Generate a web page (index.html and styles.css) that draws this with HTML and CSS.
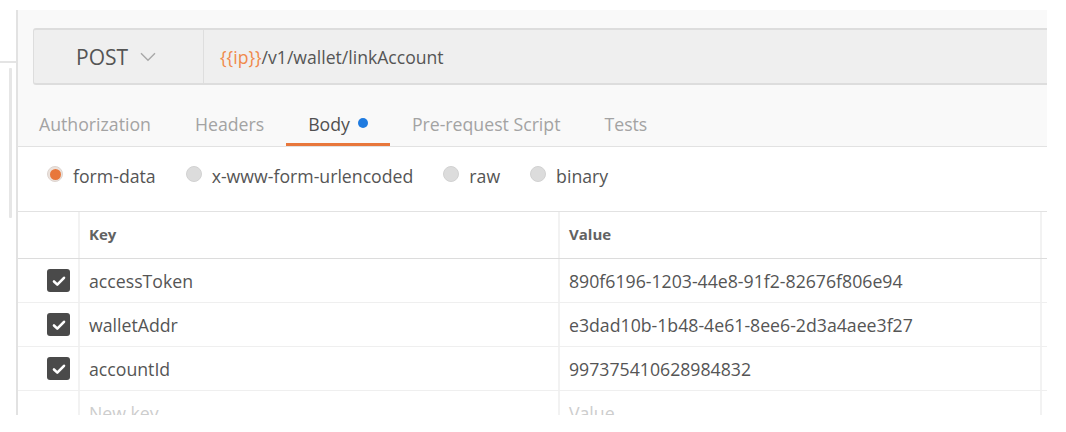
FILE: index.html
```html
<!DOCTYPE html>
<html lang="en">
<head>
<meta charset="utf-8">
<title>POST linkAccount</title>
<link rel="stylesheet" href="styles.css">
</head>
<body>
<div class="app">
  <aside class="rail">
    <div class="rail-divider"></div>
    <div class="rail-thumb"></div>
  </aside>
  <main class="panel">
    <section class="request">
      <div class="urlbar">
        <div class="method">
          <span class="method-name">POST</span>
          <svg class="chevron" width="16" height="10" viewBox="0 0 16 10" aria-hidden="true"><path d="M1 1.2 L8 8.3 L15 1.2"/></svg>
        </div>
        <div class="url"><span class="var">{{ip}}</span>/v1/wallet/linkAccount</div>
      </div>
      <nav class="tabs">
        <span class="tab">Authorization</span>
        <span class="tab">Headers</span>
        <span class="tab active">Body<span class="dot"></span></span>
        <span class="tab">Pre-request Script</span>
        <span class="tab">Tests</span>
      </nav>
    </section>

    <div class="body-types">
      <label class="radio"><span class="radio-dot checked"></span>form-data</label>
      <label class="radio"><span class="radio-dot"></span>x-www-form-urlencoded</label>
      <label class="radio"><span class="radio-dot"></span>raw</label>
      <label class="radio"><span class="radio-dot"></span>binary</label>
    </div>

    <div class="kv-table">
      <div class="kv-row kv-head">
        <div class="cell c-check"></div>
        <div class="cell c-key">Key</div>
        <div class="cell c-value">Value</div>
        <div class="cell c-end"></div>
      </div>
      <div class="kv-row">
        <div class="cell c-check"><span class="checkbox"><svg width="22" height="22" viewBox="0 0 22 22"><path d="M6 11.5 L9.3 14.6 L16 7.8"/></svg></span></div>
        <div class="cell c-key">accessToken</div>
        <div class="cell c-value">890f6196-1203-44e8-91f2-82676f806e94</div>
        <div class="cell c-end"></div>
      </div>
      <div class="kv-row">
        <div class="cell c-check"><span class="checkbox"><svg width="22" height="22" viewBox="0 0 22 22"><path d="M6 11.5 L9.3 14.6 L16 7.8"/></svg></span></div>
        <div class="cell c-key">walletAddr</div>
        <div class="cell c-value">e3dad10b-1b48-4e61-8ee6-2d3a4aee3f27</div>
        <div class="cell c-end"></div>
      </div>
      <div class="kv-row">
        <div class="cell c-check"><span class="checkbox"><svg width="22" height="22" viewBox="0 0 22 22"><path d="M6 11.5 L9.3 14.6 L16 7.8"/></svg></span></div>
        <div class="cell c-key">accountId</div>
        <div class="cell c-value">997375410628984832</div>
        <div class="cell c-end"></div>
      </div>
      <div class="kv-row">
        <div class="cell c-check"></div>
        <div class="cell c-key placeholder">New key</div>
        <div class="cell c-value placeholder">Value</div>
        <div class="cell c-end"></div>
      </div>
    </div>
  </main>
</div>
</body>
</html>
```
FILE: styles.css
```css
* { box-sizing: border-box; }

html, body {
  margin: 0;
  padding: 0;
  background: #ffffff;
}

body {
  font-family: "Open Sans", "Liberation Sans", sans-serif;
  font-size: 18px;
  color: #505050;
  width: 1066px;
  height: 432px;
  overflow: hidden;
}

.app {
  display: flex;
  align-items: flex-start;
}

/* left rail */
.rail {
  width: 16px;
  height: 415px;
  flex: none;
}
.rail-divider {
  margin-top: 61px;
  height: 2px;
  background: #e4e4e4;
}
.rail-thumb {
  margin-top: 5px;
  margin-left: 9px;
  width: 3px;
  height: 150px;
  background: #e6e6e6;
  border-radius: 1px;
}

/* main panel */
.panel {
  margin-top: 10px;
  width: 1031px;
  height: 405px;
  border-left: 2px solid #e2e2e2;
  overflow: hidden;
  flex: none;
  background: #ffffff;
}

.request {
  background: #f9f9f9;
  padding-top: 18px;
}

.urlbar {
  margin-left: 15px;
  height: 57px;
  display: flex;
  background: #efefef;
  border-top: 2px solid #dddddd;
  border-bottom: 2px solid #dddddd;
  border-left: 1px solid #dddddd;
  border-radius: 3px 0 0 3px;
}

.method {
  width: 170px;
  flex: none;
  display: flex;
  align-items: center;
  padding-left: 42px;
  border-right: 1px solid #dedede;
}
.method-name {
  font-size: 21px;
  color: #555555;
}
.chevron {
  margin-left: 12px;
  margin-top: 1px;
}
.chevron path {
  fill: none;
  stroke: #a8a8a8;
  stroke-width: 1.4;
}

.url {
  display: flex;
  align-items: center;
  padding-left: 16px;
  font-size: 17.6px;
  color: #555555;
}
.url .var {
  color: #f0894a;
}

/* tabs */
.tabs {
  margin-top: 15px;
  display: flex;
  border-bottom: 1px solid #e2e2e2;
  margin-left: -1px;
}
.tab {
  display: flex;
  align-items: center;
  height: 46px;
  padding: 5px 22px 0 22px;
  line-height: 24px;
  border-bottom: 3px solid transparent;
  color: #a3a3a3;
  font-size: 17.7px;
}
.tab.active {
  color: #505050;
  border-bottom-color: #e8773b;
}
.dot {
  width: 10px;
  height: 10px;
  border-radius: 50%;
  background: #1f7be0;
  margin-left: 8px;
  margin-top: -2px;
}

/* body type radios */
.body-types {
  height: 64px;
  display: flex;
  align-items: center;
  padding-left: 29px;
  gap: 30px;
  padding-bottom: 7px;
}
.radio {
  display: flex;
  align-items: center;
  gap: 10px;
  font-size: 17.7px;
  color: #555555;
}
.radio-dot {
  width: 16px;
  height: 16px;
  border-radius: 50%;
  background: #dcdcdc;
  border: 1px solid #d2d2d2;
  margin-top: -3px;
  display: flex;
  align-items: center;
  justify-content: center;
}
.radio-dot.checked {
  background: #ece2dc;
  border-color: #ddd4cf;
}
.radio-dot.checked::after {
  content: "";
  width: 11px;
  height: 11px;
  border-radius: 50%;
  background: #e8773b;
}

/* key value table */
.kv-table {
  border-top: 1px solid #e2e2e2;
}
.kv-row {
  display: grid;
  grid-template-columns: 62px 480px 482px 1fr;
  height: 44px;
  border-bottom: 1px solid #efefef;
}
.kv-head {
  height: 47px;
  border-bottom: 1px solid #dcdcdc;
}
.cell {
  display: flex;
  align-items: center;
  border-right: 2px solid #f2f2f2;
  padding-left: 9px;
  font-size: 17.7px;
  color: #555555;
  white-space: nowrap;
}
.kv-head .cell {
  font-size: 15px;
  font-weight: 700;
  color: #626262;
  padding-bottom: 2px;
}
.c-check {
  justify-content: flex-end;
  padding-right: 8px;
  padding-left: 0;
}
.c-end {
  border-right: none;
  padding-left: 0;
}
.placeholder {
  color: #cdcdcd;
  padding-top: 0;
}

.checkbox {
  width: 23px;
  height: 23px;
  border-radius: 3px;
  background: #4a4a4a;
  display: flex;
  align-items: center;
  justify-content: center;
}
.checkbox path {
  fill: none;
  stroke: #ffffff;
  stroke-width: 2.6;
  stroke-linecap: round;
  stroke-linejoin: round;
}
```
